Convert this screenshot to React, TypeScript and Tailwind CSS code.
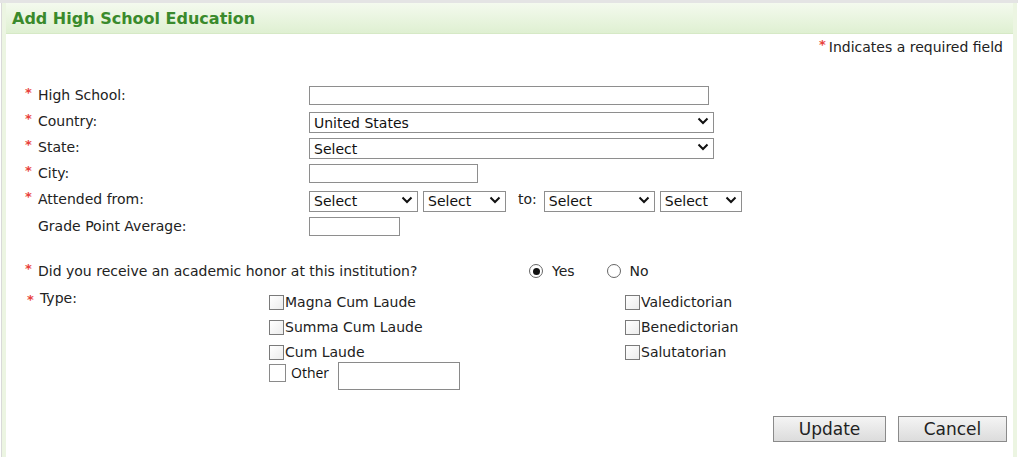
import React from "react";

const FONT = { fontFamily: '"DejaVu Sans", Verdana, sans-serif' };

function Req({ show = true }: { show?: boolean }) {
  return (
    <span className="relative -top-[3px] inline-block w-[13px] text-[13px] font-bold leading-none text-[#e8423c]">
      {show ? "*" : ""}
    </span>
  );
}

function Chevron() {
  return (
    <svg width="12" height="8" viewBox="0 0 12 8" className="pointer-events-none absolute right-[5px] top-1/2 -translate-y-1/2" aria-hidden>
      <path d="M1.5 1.5 6 6l4.5-4.5" fill="none" stroke="#111" strokeWidth="2" />
    </svg>
  );
}

function FakeSelect({ value, width }: { value: string; width: number }) {
  return (
    <div className="relative h-[21px]" style={{ width }}>
      <select
        defaultValue={value}
        className="h-full w-full appearance-none border-[1.5px] border-[#8e8e8e] bg-white pl-[4px] text-[14px] leading-none text-[#111] outline-none"
        style={FONT}
      >
        <option>{value}</option>
      </select>
      <Chevron />
    </div>
  );
}

function Box({ className = "" }: { className?: string }) {
  return <span className={`inline-block h-[15px] w-[15px] border-[1.5px] border-[#7a7a7a] bg-gradient-to-br from-white to-[#ececec] ${className}`} />;
}

function Check({ label }: { label: string }) {
  return (
    <div className="flex h-[25px] items-end">
      <Box className="mb-[3px]" />
      <span className="ml-[1px] text-[14px] text-[#222]">{label}</span>
    </div>
  );
}

function Radio({ on }: { on?: boolean }) {
  return (
    <span className="grid h-[14px] w-[14px] place-items-center rounded-full border border-[#666] bg-white">
      {on && <span className="h-[7px] w-[7px] rounded-full bg-[#111]" />}
    </span>
  );
}

function Row({ label, req = true, children }: { label: string; req?: boolean; children: React.ReactNode }) {
  return (
    <div className="flex h-[26.2px] items-center">
      <div className="flex w-[284px] items-center text-[14px] text-[#222]">
        <Req show={req} />
        <span>{label}</span>
      </div>
      {children}
    </div>
  );
}

export default function App() {
  return (
    <div className="h-[457px] w-[1018px] overflow-hidden bg-white pt-[3px]" style={FONT}>
      <div className="absolute left-0 top-0 h-[3px] w-[1018px] bg-[#e4e4e4]" />
      <div className="ml-[1px] mr-[1px] flex h-[454px] flex-col border-l-[1px] border-[#d9d9d9]">
        <div className="flex h-full flex-col border-x-[4px] border-[#ecf5e2]">
          {/* header */}
          <div className="flex h-[31px] items-center border-b border-[#d6e9c6] bg-gradient-to-b from-[#f4faee] to-[#dff0d2] pl-[6px]">
            <h1 className="relative top-[1px] text-[16px] font-bold text-[#3a8a2c]">Add High School Education</h1>
          </div>

          <div className="flex justify-end pr-[10px] pt-[3px] text-[14px] text-[#222]">
            <span className="relative top-[1px] mr-[3px] text-[13px] font-bold leading-none text-[#e8423c]">*</span>
            Indicates a required field
          </div>

          <div className="pl-[19px] pt-[24px]">
            <Row label="High School:">
              <input className="h-[19px] w-[400px] border border-[#8e8e8e] outline-none" />
            </Row>
            <Row label="Country:">
              <FakeSelect value="United States" width={405} />
            </Row>
            <Row label="State:">
              <FakeSelect value="Select" width={405} />
            </Row>
            <Row label="City:">
              <input className="h-[19px] w-[169px] border border-[#8e8e8e] outline-none" />
            </Row>
            <Row label="Attended from:">
              <div className="flex items-center gap-[5px]">
                <FakeSelect value="Select" width={109} />
                <FakeSelect value="Select" width={83} />
                <span className="ml-[7px] mr-[2px] text-[14px] text-[#222]">to:</span>
                <FakeSelect value="Select" width={111} />
                <FakeSelect value="Select" width={82} />
              </div>
            </Row>
            <Row label="Grade Point Average:" req={false}>
              <input className="h-[19px] w-[91px] border border-[#8e8e8e] outline-none" />
            </Row>

            <div className="mt-[22px] flex h-[20px] items-center">
              <div className="flex w-[504px] items-center text-[14px] text-[#222]">
                <Req />
                <span>Did you receive an academic honor at this institution?</span>
              </div>
              <Radio on />
              <span className="ml-[9px] text-[14px] text-[#222]">Yes</span>
              <span className="ml-[32px]" />
              <Radio />
              <span className="ml-[9px] text-[14px] text-[#222]">No</span>
            </div>

            <div className="mt-[2px] flex">
              <div className="flex h-[26px] w-[244px] items-end pl-[2px] text-[14px] text-[#222]">
                <Req />
                <span>Type:</span>
              </div>
              <div className="mt-[5px] w-[356px]">
                <Check label="Magna Cum Laude" />
                <Check label="Summa Cum Laude" />
                <Check label="Cum Laude" />
                <div className="-mt-[1px] flex items-start">
                  <span className="mt-[2px] h-[18px] w-[17px] border border-[#8a8a8a] bg-white" />
                  <span className="ml-[5px] text-[14px] text-[#111]" style={{ fontFamily: '"Open Sans", "Liberation Sans", sans-serif' }}>Other</span>
                  <input className="ml-[9px] h-[28px] w-[122px] border border-[#8a8a8a] outline-none" />
                </div>
              </div>
              <div className="mt-[5px]">
                <Check label="Valedictorian" />
                <Check label="Benedictorian" />
                <Check label="Salutatorian" />
              </div>
            </div>

            <div className="mt-[26px] flex justify-end gap-[12px] pr-[6px]">
              <button className="h-[26px] w-[113px] border border-[#8a8a8a] bg-gradient-to-b from-[#f4f4f4] to-[#dcdcdc] text-[17px] text-[#222]">Update</button>
              <button className="h-[26px] w-[109px] border border-[#8a8a8a] bg-gradient-to-b from-[#f4f4f4] to-[#dcdcdc] text-[17px] text-[#222]">Cancel</button>
            </div>
          </div>
        </div>
      </div>
    </div>
  );
}
